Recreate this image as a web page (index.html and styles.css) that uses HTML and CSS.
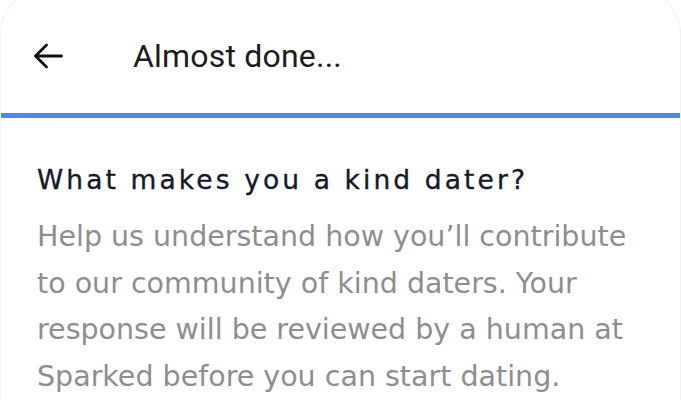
FILE: index.html
```html
<!DOCTYPE html>
<html lang="en">
<head>
    <meta charset="UTF-8">
    <meta name="viewport" content="width=device-width, initial-scale=1.0">
    <title>Almost done</title>
    <link rel="stylesheet" href="styles.css">
</head>
<body>

<div class="sheet">
    <div class="top-bar">
        <button class="back-btn" aria-label="Back">
            <svg width="30" height="26" viewBox="0 0 30 26" fill="none" stroke="#111" stroke-width="2.8" stroke-linecap="round" stroke-linejoin="round">
                <path d="M28.5 13H3"/>
                <path d="M13.5 2L2.5 13L13.5 24"/>
            </svg>
        </button>
        <span class="title">Almost done...</span>
    </div>
    <div class="progress"></div>

    <div class="content">
        <h2>What makes you a kind dater?</h2>
        <p>Help us understand how you’ll contribute to our community of kind daters. Your response will be reviewed by a human at Sparked before you can start dating.</p>
    </div>
</div>

</body>
</html>
```

FILE: styles.css
```css
body {
    margin: 0;
    padding: 0;
    background-color: #ffffff;
    font-family: 'DejaVu Sans', sans-serif;
    overflow: hidden;
}
.sheet {
    margin-top: -12px;
    border: 1px solid #f1f1f1;
    border-bottom: none;
    border-radius: 46px 46px 0 0;
    background-color: #fff;
    min-height: 420px;
}
.top-bar {
    display: flex;
    align-items: center;
    height: 124px;
    padding: 10px 0 0 32px;
    box-sizing: border-box;
}
.back-btn {
    background: none;
    border: none;
    padding: 0;
    width: 30px;
    height: 26px;
    margin-right: 70px;
    cursor: pointer;
}
.back-btn svg {
    display: block;
}
.title {
    font-family: 'Roboto', sans-serif;
    font-size: 32px;
    letter-spacing: 0.2px;
    color: #1c1c1c;
}
.progress {
    height: 5px;
    background-color: #5087e2;
}
.content {
    padding: 46px 40px 0 36px;
}
h2 {
    margin: 0 0 19px 0;
    font-size: 26.5px;
    line-height: 31px;
    font-weight: normal;
    color: #151a2b;
    letter-spacing: 3.1px;
    -webkit-text-stroke: 0.35px #151a2b;
}
p {
    margin: 0;
    font-size: 28.5px;
    line-height: 46.5px;
    color: #8e8e8e;
}
```
